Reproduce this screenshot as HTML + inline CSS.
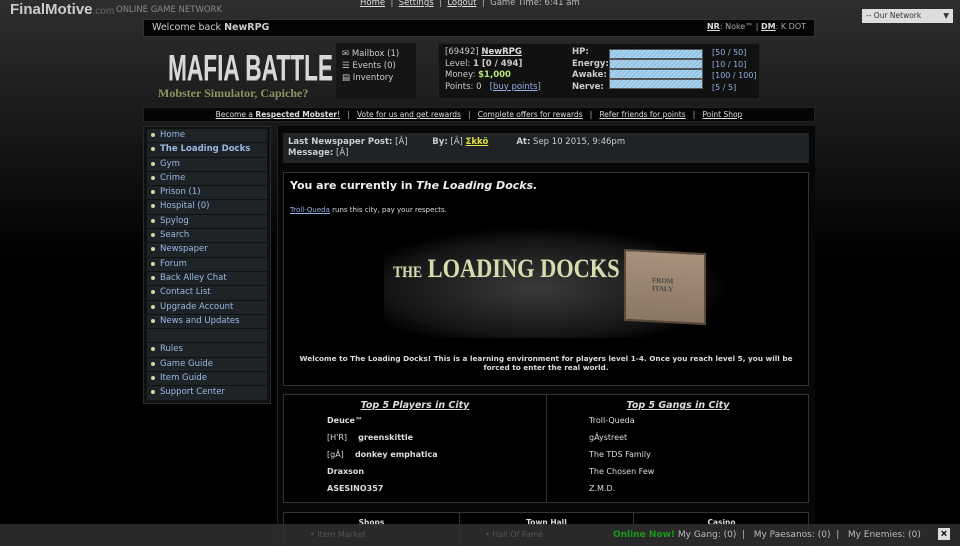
<!DOCTYPE html>
<html><head><meta charset="utf-8"><style>
*{margin:0;padding:0;box-sizing:border-box}
html,body{width:960px;height:546px;overflow:hidden}
body{background:#000;font-family:Verdana,"DejaVu Sans",sans-serif;font-size:9px;color:#ddd;position:relative}
.bg{position:absolute;left:0;top:0;width:960px;height:260px;background:linear-gradient(#2e2e2e,#1a1a1a 45%,#000)}
.a{position:absolute}
a{color:#ddd;text-decoration:underline}
.blue{color:#8fb0e0}
.side{left:143px;top:126px;width:128px;height:278px;background:#111;border:1px solid #2a2a2a;padding:2px 3px}
.side div{height:13.3px;margin-bottom:1px;background:#1e2328;color:#9bb8e0;font-size:8.5px;padding-left:13px;line-height:13px;position:relative}
.side div:before{content:"";position:absolute;left:4px;top:4px;width:4px;height:4px;background:#d8d8a0;border-radius:2px}
.side div.e:before{display:none}
.bar{background:#9dc8e8;border:1px solid #555;height:10px;width:94px;background-image:repeating-linear-gradient(135deg,#a8d4f0 0 2px,#8cb8d8 2px 3px)}
</style></head><body>
<div class="bg"></div>
<div class="a" style="left:10px;top:1px;font:bold 15px 'Liberation Sans',sans-serif;color:#ccc">FinalMotive<span style="font-size:10px;font-weight:normal;color:#666">.com</span></div>
<div class="a" style="left:116px;top:5px;font-size:8.5px;color:#888">ONLINE GAME NETWORK</div>
<div class="a" style="left:360px;top:-2px;font-size:8.5px;color:#bbb"><a>Home</a> &nbsp;| &nbsp;<a>Settings</a> &nbsp;| &nbsp;<a>Logout</a> &nbsp;| &nbsp;Game Time: 6:41 am</div>
<div class="a" style="left:862px;top:9px;width:91px;height:14px;background:#ddd;color:#333;font-size:7.5px;padding:2px 4px">-- Our Network<span style="float:right">▼</span></div>
<div class="a" style="left:143px;top:19px;width:672px;height:18px;background:#050505;border:1px solid #333;padding:2px 8px;font-size:9.5px;color:#ccc">Welcome back <b>NewRPG</b><span style="float:right;font-size:8px;color:#aaa"><b><a>NR</a></b>: Noke™ | <b><a>DM</a></b>: K DOT</span></div>
<div class="a" style="left:168px;top:47px;font:bold 36px 'Liberation Sans',sans-serif;color:#d8d8d8;transform:scaleX(.63);transform-origin:left;letter-spacing:0;text-shadow:0 1px 0 #777;white-space:nowrap">MAFIA BATTLE</div>
<div class="a" style="left:158px;top:86px;font:bold 12px 'Liberation Serif',serif;color:#8a9560">Mobster Simulator, Capiche?</div>
<div class="a" style="left:336px;top:43px;width:80px;height:56px;background:#151515;padding:5px 6px;font-size:8.5px;line-height:12px;color:#ccc">
<div>✉ Mailbox (1)</div><div>☰ Events (0)</div><div>▤ Inventory</div></div>
<div class="a" style="left:438px;top:43px;width:322px;height:56px;background:#111;border:1px solid #222;padding:3px 6px;font-size:8.5px;line-height:11.5px;color:#ccc">
<div class="a" style="left:6px;top:3px">[69492] <b><a>NewRPG</a></b><br>Level: <b>1 [0 / 494]</b><br>Money: <b style="color:#bde67a">$1,000</b><br>Points: 0 &nbsp;&nbsp;<a class="blue">[buy points]</a></div>
<div class="a" style="left:133px;top:3px;font-weight:bold">HP:<br>Energy:<br>Awake:<br>Nerve:</div>
<div class="a" style="left:170px;top:5px"><div class="bar"></div><div class="bar"></div><div class="bar"></div><div class="bar"></div></div>
<div class="a blue" style="left:273px;top:3px;font-size:8px;line-height:11.5px">[50 / 50]<br>[10 / 10]<br>[100 / 100]<br>[5 / 5]</div></div>
<div class="a" style="left:143px;top:107px;width:672px;height:15px;background:#050505;border:1px solid #222;text-align:center;font-size:7.5px;line-height:14px;color:#bbb"><a>Become a <b>Respected Mobster</b>!</a> &nbsp; | &nbsp; <a>Vote for us and get rewards</a> &nbsp; | &nbsp; <a>Complete offers for rewards</a> &nbsp; | &nbsp; <a>Refer friends for points</a> &nbsp; | &nbsp; <a>Point Shop</a></div>
<div class="a side">
<div>Home</div><div style="font-weight:bold">The Loading Docks</div><div>Gym</div><div>Crime</div><div>Prison (1)</div><div>Hospital (0)</div><div>Spylog</div><div>Search</div><div>Newspaper</div><div>Forum</div><div>Back Alley Chat</div><div>Contact List</div><div>Upgrade Account</div><div>News and Updates</div><div class="e"></div><div>Rules</div><div>Game Guide</div><div>Item Guide</div><div>Support Center</div></div>
<div class="a" style="left:277px;top:126px;width:538px;height:420px;background:#070707;border-left:1px solid #222"></div>
<div class="a" style="left:283px;top:133px;width:526px;height:30px;background:#1f2326;padding:4px 5px;font-size:8.5px;line-height:11px;color:#ccc">
<b>Last Newspaper Post:</b> [Â] <span style="margin-left:22px"><b>By:</b> [Â] <b><a style="color:#e0e040">Σkkö</a></b></span><span style="margin-left:28px"><b>At:</b> Sep 10 2015, 9:46pm</span><br><b>Message:</b> [Â]</div>
<div class="a" style="left:283px;top:172px;width:526px;height:214px;background:#000;border:1px solid #333;padding:6px 6px">
<div style="font-size:11px;font-weight:bold;color:#eee">You are currently in <i>The Loading Docks.</i></div>
<div style="font-size:7px;margin-top:14px"><a class="blue">Troll-Queda</a> runs this city, pay your respects.</div>
<div class="a" style="left:100px;top:55px;width:340px;height:110px;background:radial-gradient(ellipse at 45% 55%,#3a3a3a,#151515 55%,#000 72%)"></div>
<div class="a" style="left:109px;top:81px;font:bold 26px 'Liberation Serif',serif;color:#d6dcae;transform:scaleX(.86);transform-origin:left;white-space:nowrap;text-shadow:1px 1px 0 #333"><span style="font-size:16px">THE</span> LOADING DOCKS</div>
<div class="a" style="left:340px;top:78px;width:82px;height:72px;background:linear-gradient(#a8927e,#8a7664);border:2px solid #5a4a3a;transform:skewY(3deg)"><div style="margin:24px 0 0 26px;font:bold 7px serif;color:#444">FROM<br>ITALY</div></div>
<div class="a" style="left:2px;top:181px;width:520px;text-align:center;font-size:7.3px;font-weight:bold;color:#ddd;line-height:9px">Welcome to The Loading Docks! This is a learning environment for players level 1-4. Once you reach level 5, you will be forced to enter the real world.</div></div>
<div class="a" style="left:283px;top:394px;width:526px;height:109px;background:#000;border:1px solid #333">
<div class="a" style="left:262px;top:0;width:1px;height:107px;background:#333"></div>
<div class="a" style="left:0;top:5px;width:262px;text-align:center;font-size:9.5px;font-weight:bold;font-style:italic;text-decoration:underline">Top 5 Players in City</div>
<div class="a" style="left:263px;top:5px;width:262px;text-align:center;font-size:9.5px;font-weight:bold;font-style:italic;text-decoration:underline">Top 5 Gangs in City</div>
<div class="a" style="left:43px;top:17px;font-size:8px;line-height:17.1px;font-weight:bold">Deuce™<br><span style="font-weight:normal">[H'R]</span> &nbsp;&nbsp; greenskittle<br><span style="font-weight:normal">[gÂ]</span> &nbsp;&nbsp; donkey emphatica<br>Draxson<br>ASESINO357</div>
<div class="a" style="left:305px;top:17px;font-size:8px;line-height:17.1px">Troll-Queda<br>gÂystreet<br>The TDS Family<br>The Chosen Few<br>Z.M.D.</div></div>
<div class="a" style="left:283px;top:512px;width:526px;height:40px;background:#000;border:1px solid #333;font-size:7.5px;font-weight:bold">
<div class="a" style="left:0;top:5px;width:175px;text-align:center">Shops</div>
<div class="a" style="left:175px;top:0;width:175px;height:40px;border-left:1px solid #333;border-right:1px solid #333;padding-top:5px;text-align:center">Town Hall</div>
<div class="a" style="left:350px;top:5px;width:175px;text-align:center">Casino</div></div>
<div class="a" style="left:0;top:524px;width:960px;height:22px;background:rgba(45,45,45,.92)">
<div class="a" style="left:310px;top:6px;font-size:8px;color:#555">• Item Market</div>
<div class="a" style="left:485px;top:6px;font-size:8px;color:#555">• Hall Of Fame</div>
<div class="a" style="left:613px;top:6px;font-size:9px;color:#bbb;white-space:nowrap"><b style="color:#1a9a1a">Online Now!</b> My Gang: (0) &nbsp;| &nbsp; My Paesanos: (0) &nbsp;| &nbsp; My Enemies: (0)</div>
<div class="a" style="left:938px;top:4px;width:12px;height:12px;background:#ddd;color:#000;font:bold 11px sans-serif;line-height:12px;text-align:center">×</div></div>
</body></html>
